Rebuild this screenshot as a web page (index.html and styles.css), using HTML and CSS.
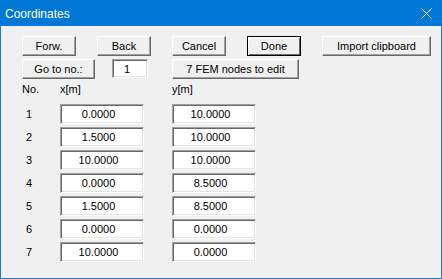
FILE: index.html
```html
<!doctype html>
<html lang="en">
<head>
  <meta charset="UTF-8">
  <title>Coordinates</title>
  <link rel="stylesheet" href="styles.css">
</head>
<body>

<div class="window">
  <div class="titlebar">
    <span class="title">Coordinates</span>
    <svg class="close" width="11" height="11" viewBox="0 0 11 11">
      <path d="M0.5 0.5 L10.5 10.5 M10.5 0.5 L0.5 10.5" stroke="#fff" stroke-width="1" fill="none"/>
    </svg>
  </div>

  <div class="content">
    <div class="row">
      <div class="btn">Forw.</div>
      <div class="btn">Back</div>
      <div class="btn">Cancel</div>
      <div class="btn default">Done</div>
      <div class="btn wide">Import clipboard</div>
    </div>

    <div class="row nav">
      <div class="btn goto">Go to no.:</div>
      <div class="field small">1</div>
      <div class="btn fem">7 FEM nodes to edit</div>
    </div>

    <div class="grid">
      <div class="head">No.</div>
      <div class="head">x[m]</div>
      <div class="head">y[m]</div>

      <div class="num">1</div><div class="field">0.0000</div><div class="field">10.0000</div>
      <div class="num">2</div><div class="field">1.5000</div><div class="field">10.0000</div>
      <div class="num">3</div><div class="field">10.0000</div><div class="field">10.0000</div>
      <div class="num">4</div><div class="field">0.0000</div><div class="field">8.5000</div>
      <div class="num">5</div><div class="field">1.5000</div><div class="field">8.5000</div>
      <div class="num">6</div><div class="field">0.0000</div><div class="field">0.0000</div>
      <div class="num">7</div><div class="field">10.0000</div><div class="field">0.0000</div>
    </div>
  </div>
</div>

</body>
</html>
```

FILE: styles.css
```css
* {
    margin: 0;
    padding: 0;
    box-sizing: border-box;
}

body {
    background-color: #fff;
    font-family: "Liberation Sans", Arial, sans-serif;
    font-size: 11px;
    color: #000;
}

.window {
    width: 442px;
    height: 279px;
    background-color: #f0f0f0;
    border: 1px solid #1a80d6;
    border-top: 0;
}

.titlebar {
    height: 26px;
    margin: 0 -1px;
    padding: 0 10px 0 5px;
    background-color: #0078d7;
    color: #fff;
    font-size: 12px;

    display: flex;
    align-items: center;
    justify-content: space-between;
}

.title {
    font-family: "Segoe UI", "Liberation Sans", sans-serif;
    padding-top: 1px;
}

.close {
    margin-top: 1px;
}

.content {
    padding: 10px 0 0 21px;
}

.row {
    display: flex;
    gap: 21px;
    height: 20px;
}

.row + .row {
    margin-top: 3px;
}

.btn {
    width: 54px;
    height: 20px;
    background-color: #f0f0f0;
    border: 1px solid;
    border-color: #fff #696969 #696969 #fff;
    box-shadow: inset -1px -1px 0 #a0a0a0;

    display: flex;
    align-items: center;
    justify-content: center;
}

.btn.default {
    border-color: #000;
    box-shadow: inset 1px 1px 0 #fff, inset -1px -1px 0 #696969;
}

.btn.wide {
    width: 109px;
}

.nav {
    gap: 0;
}

.btn.goto {
    width: 73px;
}

.field {
    width: 84px;
    height: 20px;
    background-color: #fff;
    border: 1px solid;
    border-color: #a0a0a0 #fff #fff #a0a0a0;
    box-shadow: inset 1px 1px 0 #696969, inset -1px -1px 0 #e3e3e3;
    padding-right: 7px;

    display: flex;
    align-items: center;
    justify-content: center;
}

.field.small {
    width: 36px;
    height: 19px;
    margin-left: 17px;
    padding-right: 6px;
}

.btn.fem {
    width: 127px;
    margin-left: 24px;
}

.grid {
    margin-top: 2px;
    display: grid;
    grid-template-columns: 38px 112px 84px;
    grid-auto-rows: 20px;
    row-gap: 3px;
}

.head {
    padding-top: 2px;
    line-height: 13px;
}

.num {
    padding-left: 4px;
    display: flex;
    align-items: center;
}
```
